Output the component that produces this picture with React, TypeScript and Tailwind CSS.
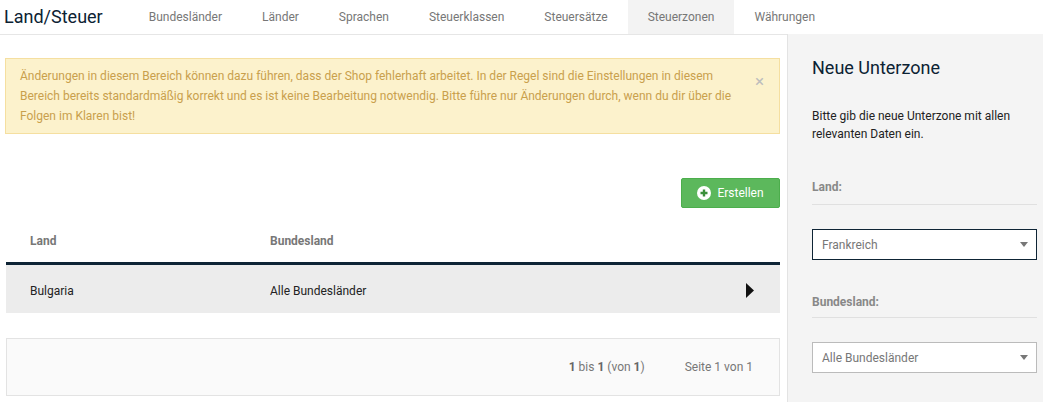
import React from "react";

const tabs = ["Bundesländer", "Länder", "Sprachen", "Steuerklassen", "Steuersätze", "Steuerzonen", "Währungen"];

function Caret() {
  return (
    <svg width="8" height="5" viewBox="0 0 8 5" className="text-[#777]">
      <path d="M0 0h8L4 5z" fill="currentColor" />
    </svg>
  );
}

export default function App() {
  return (
    <div className="flex h-[402px] w-full flex-col overflow-hidden bg-white font-['Roboto',sans-serif]">
      <header className="flex h-[34px] items-center">
        <h1 className="pl-[4px] pr-[26px] text-[18px] leading-[34px] text-[#0c2233]">Land/Steuer</h1>
        <nav className="flex h-full">
          {tabs.map((t) => (
            <div
              key={t}
              className={`flex h-full items-center px-[20px] text-[12px] text-[#777] ${t === "Steuerzonen" ? "bg-[#f3f3f3]" : ""}`}
            >
              {t}
            </div>
          ))}
        </nav>
      </header>

      <div className="flex flex-1">
        <main className="flex-1 border-t border-[#e6e6e6] pl-[5px] pr-[7px] pt-[23px]">
          <div className="relative border border-[#f5dfa0] bg-[#fcf2cc] py-[7px] pl-[14px] pr-[30px] text-[12px] leading-[20px] text-[#c9a04c]">
            Änderungen in diesem Bereich können dazu führen, dass der Shop fehlerhaft arbeitet. In der Regel sind die Einstellungen in diesem
            <br />
            Bereich bereits standardmäßig korrekt und es ist keine Bearbeitung notwendig. Bitte führe nur Änderungen durch, wenn du dir über die
            <br />
            Folgen im Klaren bist!
            <span className="absolute right-[15px] top-[14px] text-[17px] leading-[17px] text-[#bdbdbd]">×</span>
          </div>

          <div className="mt-[44px] flex justify-end">
            <button className="flex h-[30px] w-[99px] items-center justify-center gap-[6px] rounded-[2px] border border-[#4cae4c] bg-[#5cb85c] text-[12px] text-white">
              <svg width="14" height="14" viewBox="0 0 14 14">
                <circle cx="7" cy="7" r="7" fill="#fff" />
                <path d="M7 3.5v7M3.5 7h7" stroke="#3a8f3a" strokeWidth="2.4" />
              </svg>
              Erstellen
            </button>
          </div>

          <div className="ml-[1px] mt-[12px]">
            <div className="flex h-[45px] items-center border-b-[3px] border-[#0e2435] text-[12px] font-bold text-[#777]">
              <div className="w-[240px] pl-[24px]">Land</div>
              <div className="pl-[24px]">Bundesland</div>
            </div>
            <div className="flex h-[48px] items-center bg-[#ececec] pt-[3px] text-[12px] text-[#222]">
              <div className="w-[240px] pl-[24px]">Bulgaria</div>
              <div className="flex-1 pl-[24px]">Alle Bundesländer</div>
              <svg width="8" height="15" viewBox="0 0 8 15" className="mr-[26px]">
                <path d="M0 0l8 7.5L0 15z" fill="#111" />
              </svg>
            </div>

            <div className="mt-[25px] flex h-[58px] items-center justify-end gap-[40px] border border-[#e3e3e3] bg-[#fafafa] pr-[26px] text-[12px] text-[#777]">
              <span>
                <b className="text-[#666]">1</b> bis <b className="text-[#666]">1</b> (von <b className="text-[#666]">1</b>)
              </span>
              <span>Seite 1 von 1</span>
            </div>
          </div>
        </main>

        <aside className="w-[256px] border-l border-[#e3e3e3] bg-[#f4f4f4] pl-[24px] pr-[6px] pt-[23px]">
          <h2 className="text-[18px] leading-[22px] text-[#0c2233]">Neue Unterzone</h2>
          <p className="mt-[28px] text-[12px] leading-[18px] text-[#222]">
            Bitte gib die neue Unterzone mit allen relevanten Daten ein.
          </p>

          <div className="mt-[35px] border-b border-[#e0e0e0] pb-[8px] text-[12px] font-bold leading-[18px] text-[#888]">Land:</div>
          <div className="mt-[24px] flex h-[31px] items-center justify-between border border-[#0e2435] bg-white pl-[9px] pr-[8px] text-[12px] text-[#777]">
            Frankreich
            <Caret />
          </div>

          <div className="mt-[33px] border-b border-[#e0e0e0] pb-[6px] text-[12px] font-bold leading-[18px] text-[#888]">Bundesland:</div>
          <div className="mt-[24px] flex h-[31px] items-center justify-between border border-[#bbb] bg-white pl-[9px] pr-[8px] text-[12px] text-[#777]">
            Alle Bundesländer
            <Caret />
          </div>
        </aside>
      </div>
    </div>
  );
}
